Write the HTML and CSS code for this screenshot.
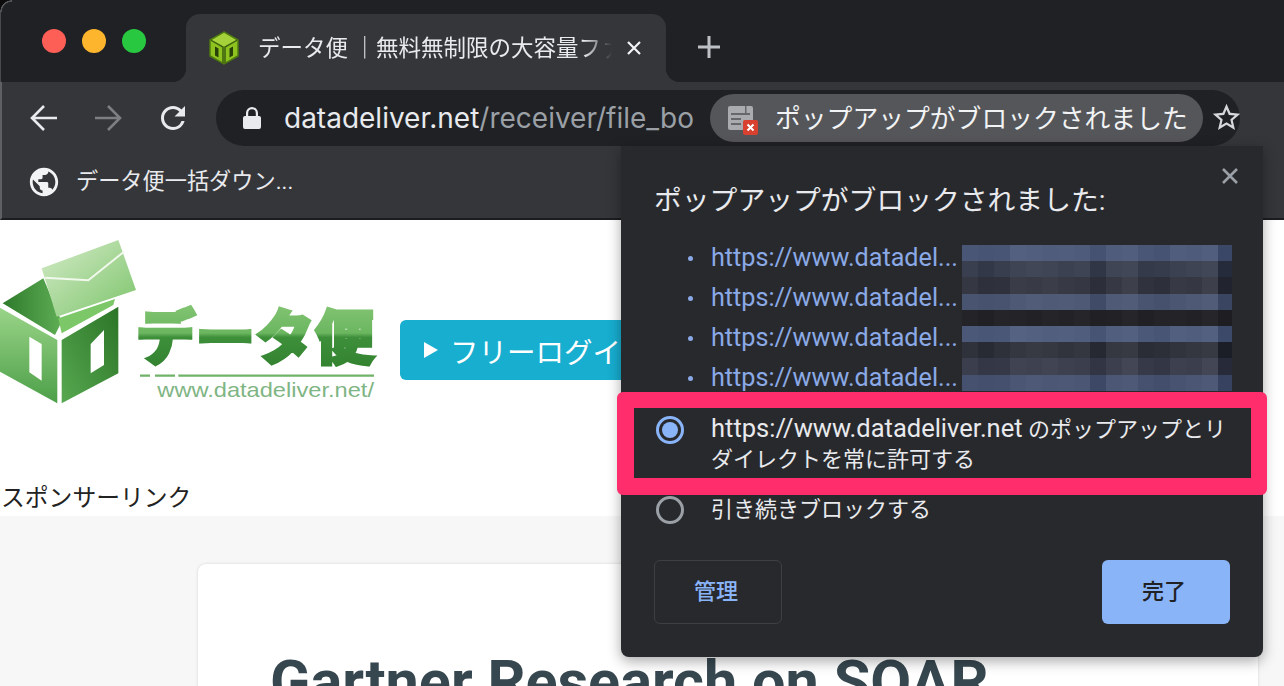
FILE: index.html
```html
<!DOCTYPE html>
<html lang="ja">
<head>
    <meta charset="UTF-8">
    <title>データ便</title>
    <link rel="stylesheet" href="styles.css">
</head>
<body>
    <div class="tabstrip">
        <div class="traffic">
            <span class="dot red"></span>
            <span class="dot yellow"></span>
            <span class="dot green"></span>
        </div>
        <div class="tab">
            <svg class="favicon" viewBox="0 0 30 34">
                <path d="M15 1 29 9v16l-14 8-14-8V9z" fill="#8dc21f" stroke="#4d7a10" stroke-width="1.5"/>
                <path d="M2 9l12 7v16M28 9l-12 7v16" fill="none" stroke="#3f6410" stroke-width="1.6"/>
                <path d="M15 2 27 9 15 15.500 3 9z" fill="#a5d23a"/>
                <path d="M6 15.500l3.500 2v9l-3.500-2zM24 15.500l-3.500 2v9l3.500-2z" fill="#28400a"/>
            </svg>
            <span class="tab-title">データ便 ｜無料無制限の大容量ファイル転送サービス</span>
            <svg class="tab-close" viewBox="0 0 16 16"><path d="M2 2l12 12M14 2 2 14" stroke="#f1f3f4" stroke-width="2.200"/></svg>
        </div>
        <svg class="new-tab" viewBox="0 0 24 24"><path d="M12 1v22M1 12h22" stroke="#bdc1c6" stroke-width="3"/></svg>
    </div>

    <div class="toolbar">
        <svg class="nav-icon" viewBox="0 0 28 28"><path d="M27 14H3M14 2 2 14l12 12" fill="none" stroke="#e8eaed" stroke-width="2.600"/></svg>
        <svg class="nav-icon" viewBox="0 0 28 28"><path d="M1 14h24M14 2l12 12-12 12" fill="none" stroke="#7d7f83" stroke-width="2.600"/></svg>
        <svg class="nav-icon reload" viewBox="0 0 24 24"><path fill="#e8eaed" d="M17.650 6.350A7.958 7.958 0 0 0 12 4c-4.420 0-7.990 3.580-7.990 8s3.570 8 7.990 8c3.730 0 6.840-2.550 7.730-6h-2.080A5.990 5.990 0 0 1 12 18c-3.310 0-6-2.690-6-6s2.690-6 6-6c1.660 0 3.140.69 4.220 1.780L13 11h7V4l-2.350 2.350z"/></svg>
        <div class="omnibox">
            <svg class="lock" viewBox="0 0 18 22"><path fill="#e8eaed" d="M3 9V6a6 6 0 0 1 12 0v3h1a2 2 0 0 1 2 2v9a2 2 0 0 1-2 2H2a2 2 0 0 1-2-2v-9a2 2 0 0 1 2-2zm2.200 0h7.600V6a3.800 3.800 0 0 0-7.600 0z"/></svg>
            <div class="url"><span class="host">datadeliver.net</span>/receiver/file_bo</div>
            <div class="blocked-pill">
                <svg class="pill-icon" viewBox="0 0 30 30">
                    <path d="M0 3a2 2 0 0 1 2-2h21a2 2 0 0 1 2 2v20a2 2 0 0 1-2 2H2a2 2 0 0 1-2-2z" fill="#a9abae"/>
                    <path d="M3 8h19v2H3zM3 13h10v2H3zM3 18h10v2H3zM17 1h1.500v7H17z" fill="#66676b"/>
                    <rect x="15" y="15" width="15" height="15" rx="2" fill="#d8402f"/>
                    <path d="M19.500 19.500l6 6M25.500 19.500l-6 6" stroke="#fff" stroke-width="2"/>
                </svg>
                <span class="pill-text">ポップアップがブロックされました</span>
            </div>
            <svg class="star" viewBox="0 0 24 24"><path fill="#d5d7da" d="M22 9.240l-7.190-.62L12 2 9.190 8.630 2 9.240l5.460 4.730L5.820 21 12 17.270 18.180 21l-1.630-7.030L22 9.240zM12 15.400l-3.760 2.270 1-4.280-3.320-2.880 4.380-.38L12 6.100l1.710 4.040 4.380.38-3.320 2.880 1 4.280L12 15.400z"/></svg>
        </div>
    </div>

    <div class="bookmarks">
        <svg class="globe" viewBox="0 0 24 24"><path fill="#f1f3f4" d="M12 2C6.480 2 2 6.480 2 12s4.480 10 10 10 10-4.480 10-10S17.520 2 12 2zm-1 17.930c-3.950-.49-7-3.850-7-7.930 0-.62.08-1.210.21-1.790L9 15v1c0 1.100.9 2 2 2v1.930zm6.900-2.540c-.26-.81-1-1.390-1.900-1.390h-1v-3c0-.55-.45-1-1-1H8v-2h2c.55 0 1-.45 1-1V7h2c1.100 0 2-.9 2-2v-.41c2.930 1.190 5 4.060 5 7.410 0 2.080-.8 3.970-2.100 5.390z"/></svg>
        <span class="bookmark-text">データ便一括ダウン...</span>
    </div>

    <div class="page">
        <div class="site-header">
            <svg class="logo" viewBox="0 0 1290 570">
                <defs>
                    <linearGradient id="wall-left" x1="0" y1="0" x2="0" y2="1"><stop offset="0" stop-color="#9ad488"/><stop offset="1" stop-color="#4c9f48"/></linearGradient>
                    <linearGradient id="wall-right" x1="0" y1="1" x2="1" y2="0"><stop offset="0" stop-color="#57a850"/><stop offset="1" stop-color="#2b7427"/></linearGradient>
                    <linearGradient id="flap" x1="0" y1="0" x2="1" y2="0"><stop offset="0" stop-color="#2d7a2b"/><stop offset="1" stop-color="#5fae55"/></linearGradient>
                    <linearGradient id="mail" x1="0" y1="0" x2="1" y2="1"><stop offset="0" stop-color="#d5ebc8"/><stop offset="1" stop-color="#7cc46b"/></linearGradient>
                    <linearGradient id="logo-text" x1="0" y1="0" x2="0" y2="1"><stop offset="0" stop-color="#8dcb7c"/><stop offset=".5" stop-color="#6cb660"/><stop offset=".55" stop-color="#3e8f3a"/><stop offset="1" stop-color="#2f7f2d"/></linearGradient>
                </defs>
                <path d="M8 235 130 160 185 290 165 330z" fill="url(#flap)"/>
                <path d="M0 248 172 345V535L0 440z" fill="url(#wall-left)"/>
                <path d="M185 345 355 245V445L185 535z" fill="url(#wall-right)"/>
                <path d="M88 335 125 357V467L88 442zM272 357 312 315V420L272 445z" fill="#fff"/>
                <path d="M125 130 355 45 408 195 170 275z" fill="url(#mail)"/>
                <path d="M135 158 265 166 372 80" fill="none" stroke="#f1f9ec" stroke-width="6"/>
                <path d="M175 280 345 222 340 240 185 325z" fill="#7cc868"/>
                <text class="logo-word" x="408" y="402" textLength="715" lengthAdjust="spacingAndGlyphs" fill="url(#logo-text)" stroke="url(#logo-text)">データ便</text>
                <path d="M420 452h30M465 452h60M535 452H1122" stroke="#6fb268" stroke-width="7"/>
                <text class="logo-url" x="472" y="515" textLength="650" lengthAdjust="spacingAndGlyphs">www.datadeliver.net/</text>
            </svg>
            <div class="login-button"><span class="login-arrow"></span>フリーログイン</div>
        </div>
        <div class="sponsor">スポンサーリンク</div>
        <div class="content">
            <div class="card">
                <h1>Gartner Research on SOAR</h1>
            </div>
        </div>
    </div>

    <div class="popup">
        <svg class="popup-close" viewBox="0 0 18 18"><path d="M2 2l14 14M16 2 2 16" stroke="#9aa0a6" stroke-width="2.600"/></svg>
        <div class="popup-title">ポップアップがブロックされました:</div>
        <ul class="popup-list">
            <li>https://www.datadel...</li>
            <li>https://www.datadel...</li>
            <li>https://www.datadel...</li>
            <li>https://www.datadel...</li>
        </ul>
        <div class="mosaic" id="mosaic"></div>
        <div class="option">
            <span class="radio checked"></span>
            <span><span class="latin">https://www.datadeliver.net</span> のポップアップとリダイレクトを常に許可する</span>
        </div>
        <div class="option second">
            <span class="radio"></span>
            <span>引き続きブロックする</span>
        </div>
        <div class="popup-buttons">
            <div class="btn btn-manage">管理</div>
            <div class="btn btn-done">完了</div>
        </div>
        <div class="highlight"></div>
    </div>

    <script src="mosaic.js"></script>
</body>
</html>
```

FILE: styles.css
```css
* {
    box-sizing: border-box;
}
html, body {
    height: 686px;
    overflow: hidden;
}
body {
    margin: 0;
    position: relative;
    font-family: Roboto, "Noto Sans CJK JP", sans-serif;
    background-color: white;
    color: #e8eaed;
    display: flex;
    flex-direction: column;
}

/* tabs */
.tabstrip {
    height: 82px;
    flex-shrink: 0;
    background-color: #202124;
    border-left: 1px solid #4a4b4f;
    display: flex;
    align-items: flex-end;
    position: relative;
}
.tabstrip::before {
    content: "";
    position: absolute;
    left: -1px;
    top: 0;
    width: 12px;
    height: 12px;
    background: radial-gradient(circle at 100% 100%, #202124 10px, #55565a 10.500px, #55565a 11.500px, #0c0c0d 12px);
}
.traffic {
    width: 185px;
    height: 68px;
    padding: 15px 0 0 41px;
    display: flex;
    gap: 16px;
}
.dot {
    width: 24px;
    height: 24px;
    border-radius: 50%;
}
.red { background-color: #fd5f57; }
.yellow { background-color: #fdb52d; }
.green { background-color: #28c840; }
.tab {
    width: 480px;
    height: 68px;
    background-color: #35363a;
    border-radius: 14px 14px 0 0;
    display: flex;
    align-items: center;
    padding: 0 24px 0 23px;
    position: relative;
}
.tab::before,
.tab::after {
    content: "";
    position: absolute;
    bottom: 0;
    width: 14px;
    height: 14px;
}
.tab::before {
    left: -14px;
    background: radial-gradient(circle at 0 0, #202124 14px, #35363a 14.500px);
}
.tab::after {
    right: -14px;
    background: radial-gradient(circle at 100% 0, #202124 14px, #35363a 14.500px);
}
.favicon {
    width: 30px;
    height: 34px;
    flex-shrink: 0;
    margin-right: 19px;
}
.tab-title {
    flex: 1;
    font-size: 22.500px;
    line-height: 30px;
    white-space: nowrap;
    overflow: hidden;
    color: #e8eaed;
    -webkit-mask-image: linear-gradient(90deg, black 92%, transparent 100%);
    mask-image: linear-gradient(90deg, black 92%, transparent 100%);
}
.tab-close {
    width: 16px;
    height: 16px;
    margin-left: 14px;
    flex-shrink: 0;
}
.new-tab {
    width: 24px;
    height: 24px;
    margin: 0 0 23px 31px;
}

/* toolbar */
.toolbar {
    height: 64px;
    flex-shrink: 0;
    background-color: #35363a;
    border-left: 2px solid #5f6064;
    display: flex;
    align-items: flex-start;
    padding-left: 28px;
}
.nav-icon {
    width: 28px;
    height: 28px;
    margin: 22px 36px 0 0;
}
.nav-icon.reload {
    width: 36px;
    height: 36px;
    margin: 18px 25px 0 -3px;
}
.omnibox {
    width: 1024px;
    height: 56px;
    margin-top: 8px;
    background-color: #202124;
    border-radius: 28px;
    display: flex;
    align-items: center;
    padding-left: 27px;
    flex-shrink: 0;
}
.lock {
    width: 18px;
    height: 22px;
    flex-shrink: 0;
    margin-right: 23px;
}
.url {
    width: 426px;
    flex-shrink: 0;
    font-family: Inter, sans-serif;
    font-size: 28px;
    color: #9aa0a6;
    white-space: nowrap;
    overflow: hidden;
}
.host {
    color: #e8eaed;
}
.blocked-pill {
    width: 493px;
    height: 48px;
    flex-shrink: 0;
    border-radius: 24px;
    background-color: #55565a;
    display: flex;
    align-items: center;
    padding-left: 18px;
    font-size: 25.800px;
    color: #f1f3f4;
    white-space: nowrap;
}
.pill-text {
    line-height: 34px;
    padding-top: 1px;
}
.pill-icon {
    width: 30px;
    height: 30px;
    margin: 4px 17px 0 0;
}
.star {
    width: 33px;
    height: 33px;
    margin: 0 0 1px 7px;
    flex-shrink: 0;
}

/* bookmarks */
.bookmarks {
    height: 74px;
    flex-shrink: 0;
    background-color: #35363a;
    border-left: 2px solid #5f6064;
    border-bottom: 2px solid #1d1e20;
    display: flex;
    align-items: center;
    padding-left: 25px;
    font-size: 22.200px;
}
.bookmark-text {
    line-height: 30px;
    padding-bottom: 3px;
}
.globe {
    width: 34px;
    height: 34px;
    margin-right: 15px;
}

/* page behind */
.page {
    flex: 1;
    display: flex;
    flex-direction: column;
    min-height: 0;
}
.site-header {
    height: 230px;
    flex-shrink: 0;
    background-color: white;
    box-shadow: 0 1px 3px rgba(0, 0, 0, 0.25);
    padding-top: 5px;
    display: flex;
    align-items: flex-start;
}
.logo {
    width: 430px;
    height: 190px;
    margin-right: -30px;
    flex-shrink: 0;
}
.logo-word {
    font-size: 178px;
    font-weight: 900;
    stroke-width: 9px;
    font-family: "Noto Sans CJK JP", sans-serif;
}
.logo-url {
    font-size: 62px;
    fill: #7fb584;
    font-family: "Liberation Sans", sans-serif;
}
.login-button {
    width: 330px;
    height: 60px;
    margin-top: 95px;
    background-color: #17aed0;
    border-radius: 6px;
    color: white;
    font-size: 28.500px;
    display: flex;
    align-items: center;
    padding-left: 24px;
    white-space: nowrap;
}
.login-arrow {
    width: 0;
    height: 0;
    border-left: 14px solid white;
    border-top: 8px solid transparent;
    border-bottom: 8px solid transparent;
    margin-right: 12px;
}
.sponsor {
    height: 66px;
    flex-shrink: 0;
    background-color: white;
    color: #222;
    font-size: 23.800px;
    padding: 31px 0 0 1px;
    line-height: 35px;
}
.content {
    flex: 1;
    background-color: #f7f7f7;
    padding: 48px 26px 0 198px;
    min-height: 0;
    overflow: hidden;
}
.card {
    height: 300px;
    background-color: white;
    border-radius: 8px;
    box-shadow: 0 0 3px rgba(0, 0, 0, 0.15);
    padding: 87px 0 0 72px;
}
.card h1 {
    margin: 0;
    font-size: 59.400px;
    line-height: 62px;
    font-weight: 700;
    color: #37474f;
    white-space: nowrap;
}

/* popup bubble */
.popup {
    position: absolute;
    left: 621px;
    top: 146px;
    width: 642px;
    height: 511px;
    background-color: #28292d;
    border-radius: 0 0 8px 8px;
    box-shadow: 0 4px 14px rgba(0, 0, 0, 0.35);
    padding: 36px 33px 0;
    font-size: 22px;
}
.popup-close {
    position: absolute;
    right: 24px;
    top: 21px;
    width: 18px;
    height: 18px;
}
.popup-title {
    font-size: 27.800px;
    line-height: 36px;
    padding-top: 1px;
    height: 36px;
    color: #e8eaed;
    white-space: nowrap;
}
.popup-list {
    list-style: none;
    margin: 20px 0 0;
    padding: 0 0 0 57px;
    height: 160px;
    color: #8aa9e6;
    font-size: 25.200px;
}
.popup-list li {
    height: 40px;
    line-height: 40px;
    position: relative;
}
.popup-list li::before {
    content: "";
    position: absolute;
    left: -23px;
    top: 18px;
    width: 5px;
    height: 5px;
    border-radius: 50%;
    background-color: #8aa9e6;
}
.mosaic {
    position: absolute;
    left: 341px;
    top: 99px;
    display: grid;
    grid-template-columns: repeat(16, 16px) 14px;
    grid-auto-rows: 16.200px;
}
.option {
    display: flex;
    align-items: flex-start;
    gap: 27px;
    margin-top: 17px;
    line-height: 30px;
    color: #e8eaed;
}
.option.second {
    margin-top: 20px;
}
.latin {
    font-size: 25.500px;
    line-height: 1;
}
.radio {
    width: 28px;
    height: 28px;
    border-radius: 50%;
    border: 3px solid #9aa0a6;
    flex-shrink: 0;
    margin: 1px 0 0 2px;
    position: relative;
}
.radio.checked {
    border-color: #8ab4f8;
}
.radio.checked::after {
    content: "";
    position: absolute;
    left: 3px;
    top: 3px;
    width: 16px;
    height: 16px;
    border-radius: 50%;
    background-color: #8ab4f8;
}
.popup-buttons {
    display: flex;
    justify-content: space-between;
    margin-top: 35px;
}
.btn {
    width: 128px;
    height: 64px;
    border-radius: 6px;
    display: flex;
    align-items: center;
    justify-content: center;
    font-weight: 500;
    padding: 0 4px 6px 0;
}
.btn-manage {
    border: 1px solid #3c4043;
    color: #8ab4f8;
}
.btn-done {
    background-color: #8ab4f8;
    color: #202124;
}
.highlight {
    position: absolute;
    left: -4px;
    top: 246px;
    width: 650px;
    height: 103px;
    border: solid #ff2d6b;
    border-width: 16px 16px 17px 17px;
    border-radius: 6px;
}
```

FILE: mosaic.js
```js
// pixelated block that hides the rest of the urls
const rows = [
    [75, 88, 120],
    [58, 63, 80],
    [51, 54, 65],
    [74, 85, 114],
    [35, 35, 39],
    [78, 90, 122],
    [48, 50, 59],
    [56, 60, 75],
    [70, 82, 112]
];
const cols = [0, -5, -2, 6, 6, 6, 4, 4, -8, 4, 8, -3, -4, 3, 3, 8, -18];

const mosaic = document.getElementById('mosaic');
rows.forEach((row, r) => {
    cols.forEach((offset, c) => {
        const cell = document.createElement('div');
        const shift = (r === 4 ? 0.2 : 1) * offset + ((r * 7 + c * 3) % 5) - 2;
        cell.style.backgroundColor = `rgb(${row.map(v => Math.round(v + shift)).join(',')})`;
        mosaic.appendChild(cell);
    });
});
```
